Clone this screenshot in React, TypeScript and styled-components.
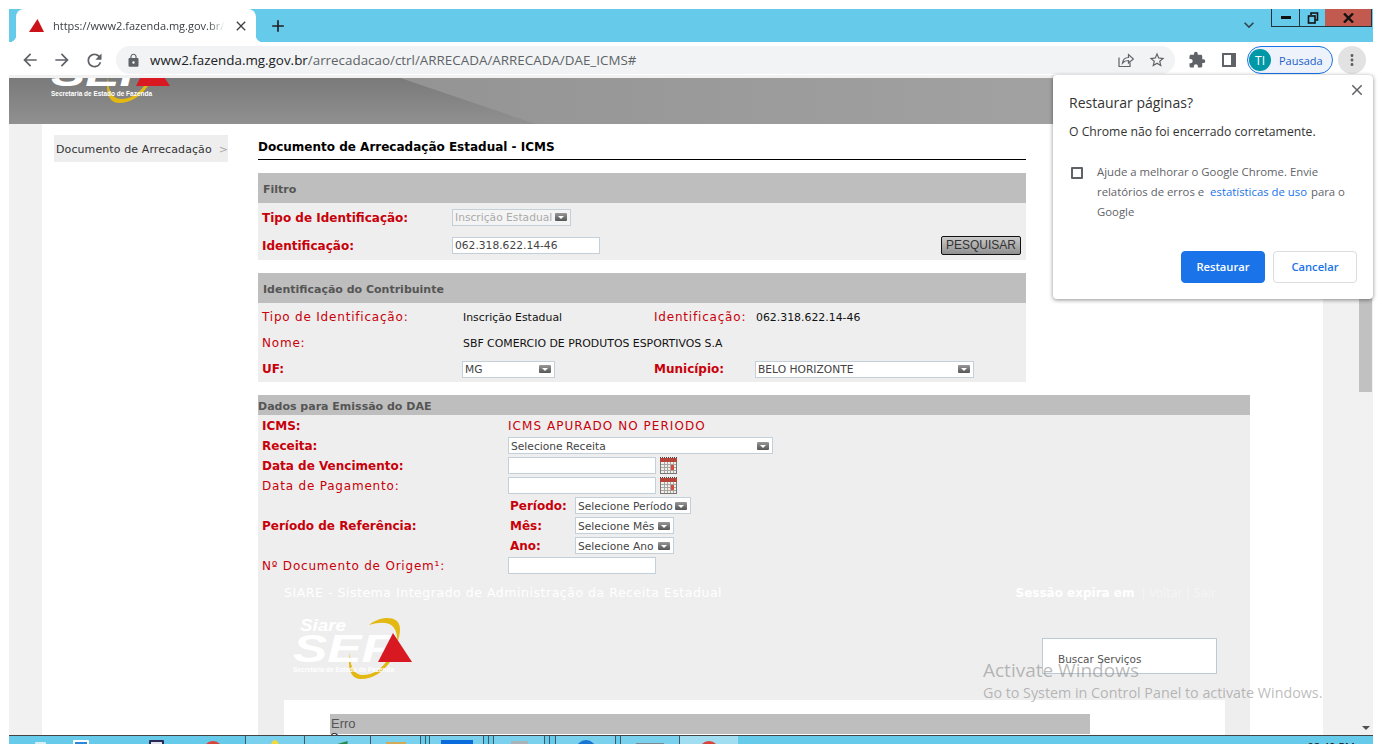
import { ReactNode } from "react";
import styled, { createGlobalStyle } from "styled-components";
import {
  MdAdd,
  MdArrowBack,
  MdArrowForward,
  MdClose,
  MdExpandMore,
  MdExtension,
  MdLock,
  MdMoreVert,
  MdRefresh,
  MdStarBorder,
} from "react-icons/md";

const GlobalStyle = createGlobalStyle`
  html, body {
    margin: 0;
    padding: 0;
    background: #fff;
    overflow: hidden;
  }
  * { box-sizing: border-box; }
`;

const CHROME_FONT = `"Open Sans", "Noto Sans", sans-serif`;
const PAGE_FONT = `"DejaVu Sans", Verdana, sans-serif`;
const RED = "#c8000a";

/* browser frame */
const Screen = styled.div`
  position: relative;
  width: 1382px;
  height: 744px;
  padding: 9px 9px 0;
  overflow: hidden;
  display: flex;
  flex-direction: column;
`;

const TabStrip = styled.div`
  height: 33px;
  flex: none;
  background: #66cbea;
  display: flex;
  align-items: stretch;
  padding-left: 7px;
`;

const Tab = styled.div`
  position: relative;
  width: 240px;
  background: #fff;
  border-radius: 8px 8px 0 0;
  display: flex;
  align-items: center;
  padding: 0 7px 0 13px;
  font: 11px ${CHROME_FONT};
  color: #3c4043;

  &::before,
  &::after {
    content: "";
    position: absolute;
    bottom: 0;
    width: 7px;
    height: 7px;
  }
  &::before {
    left: -7px;
    background: radial-gradient(circle at 0 0, transparent 7px, #fff 7.5px);
  }
  &::after {
    right: -7px;
    background: radial-gradient(circle at 100% 0, transparent 7px, #fff 7.5px);
  }
`;

const TabTitle = styled.span`
  flex: 1;
  margin-left: 9px;
  white-space: nowrap;
  overflow: hidden;
  -webkit-mask-image: linear-gradient(90deg, #000 155px, transparent 172px);
  mask-image: linear-gradient(90deg, #000 155px, transparent 172px);
`;

const StripIcon = styled.span<{ $gap?: number; $color?: string }>`
  display: flex;
  align-items: center;
  margin-left: ${(p) => p.$gap ?? 0}px;
  color: ${(p) => p.$color ?? "#202124"};
`;

const ChevronIcon = styled(StripIcon)`
  padding-bottom: 2px;
`;

const StripSpacer = styled.div`
  flex: 1;
`;

const WindowControls = styled.div`
  display: flex;
  height: 18px;
  margin-left: 12px;
  margin-right: 1px;
  border: 1px solid #22333b;
  border-top: none;
`;

const WindowButton = styled.div<{ $w: number; $close?: boolean }>`
  width: ${(p) => p.$w}px;
  display: flex;
  align-items: center;
  justify-content: center;
  background: ${(p) => (p.$close ? "#c35a50" : "transparent")};
  border-left: ${(p) => (p.$close ? "none" : "1px solid #22333b")};
  &:first-child {
    border-left: none;
  }
`;

const Toolbar = styled.div`
  height: 36px;
  flex: none;
  background: #fff;
  border-bottom: 3px solid #f1f1f1;
  display: flex;
  align-items: flex-start;
  padding: 4px 7px 0 0;
`;

const NavButton = styled.span`
  width: 32px;
  height: 28px;
  display: flex;
  align-items: center;
  justify-content: center;
  color: #5f6368;
  &:first-child {
    margin-left: 5px;
  }
`;

const AddressBar = styled.div`
  width: 1059px;
  height: 28px;
  margin-left: 6px;
  border-radius: 14px;
  background: #f1f3f4;
  display: flex;
  align-items: center;
  padding: 0 9px 0 10px;
  font: 13.4px ${CHROME_FONT};
  color: #5f6368;
`;

const Url = styled.span`
  flex: 1;
  margin-left: 9px;
  white-space: nowrap;
  b {
    font-weight: 400;
    color: #202124;
  }
`;

const BarIcon = styled.span<{ $gap?: number }>`
  display: flex;
  align-items: center;
  justify-content: center;
  color: #5f6368;
  margin-left: ${(p) => p.$gap ?? 0}px;
`;

const ToolIcon = styled.span<{ $gap: number }>`
  height: 28px;
  display: flex;
  align-items: center;
  color: #5f6368;
  margin-left: ${(p) => p.$gap}px;
`;

const ProfilePill = styled.div`
  width: 86px;
  height: 28px;
  margin-left: 11px;
  border: 1px solid #1a73e8;
  border-radius: 14px;
  background: #edf2fb;
  display: flex;
  align-items: center;
  padding-left: 1px;
  font: 11px ${CHROME_FONT};
  color: #1a5fc8;
`;

const Avatar = styled.span`
  width: 22px;
  height: 22px;
  border-radius: 50%;
  background: #0097a7;
  color: #fff;
  font-size: 12px;
  display: flex;
  align-items: center;
  justify-content: center;
  margin-right: 8px;
`;

const MenuButton = styled.span`
  width: 28px;
  height: 28px;
  margin-left: 5px;
  border-radius: 50%;
  background: #e2e2e2;
  color: #5f6368;
  display: flex;
  align-items: center;
  justify-content: center;
`;

/* page */
const Viewport = styled.div`
  flex: 1;
  min-height: 0;
  display: flex;
`;

const PageArea = styled.div`
  flex: 1;
  min-width: 0;
  display: flex;
  flex-direction: column;
  overflow: hidden;
`;

const ScrollTrack = styled.div`
  width: 14px;
  flex: none;
  background: #f1f1f1;
  display: flex;
  flex-direction: column;
`;

const ScrollThumb = styled.div`
  width: 13px;
  height: 314px;
  background: #c1c1c1;
`;

const ScrollArrow = styled.div`
  align-self: center;
  margin-top: auto;
  margin-bottom: 5px;
  width: 0;
  height: 0;
  border-left: 4px solid transparent;
  border-right: 4px solid transparent;
  border-top: 4px solid #505050;
`;

const Banner = styled.div`
  position: relative;
  height: 46px;
  flex: none;
  padding-left: 42px;
  overflow: hidden;
  background: linear-gradient(180deg, #7a7a7a 0%, #909090 100%);

  &::before {
    content: "";
    position: absolute;
    inset: 0;
    background: linear-gradient(90deg, #949494 30%, #a8a8a8 100%);
    clip-path: polygon(29% 0, 100% 0, 100% 100%, 39% 100%);
  }
`;

const BannerLogo = styled.div`
  position: relative;
  margin-top: -37px;
`;

const PageBody = styled.div`
  flex: 1;
  min-height: 0;
  display: flex;
  background: #f1f1f1;
  padding: 0 36px 0 33px;
`;

const Sheet = styled.div`
  flex: 1;
  min-width: 0;
  background: #fff;
  display: flex;
  padding: 11px 0 0 12px;
  overflow: hidden;
`;

const Sidebar = styled.div`
  width: 174px;
  height: 27px;
  flex: none;
  background: #eee;
  display: flex;
  align-items: center;
  justify-content: space-between;
  padding: 2px 0 0 2px;
  font: 11px ${PAGE_FONT};
  letter-spacing: 0.1px;
  color: #333;

  span {
    color: #aaa;
  }
`;

const Content = styled.div`
  width: 992px;
  margin-left: 30px;
  flex: none;
`;

const Title = styled.h1`
  width: 768px;
  height: 25px;
  margin: 0 0 13px;
  border-bottom: 1px solid #000;
  font: bold 12px/24px ${PAGE_FONT};
  color: #000;
`;

const Panel = styled.section`
  width: 768px;
  margin-bottom: 13px;
  background: #eee;
`;

const FilterPanel = styled(Panel)`
  padding-bottom: 1px;
`;

const PanelHeader = styled.div`
  height: 30px;
  padding-left: 5px;
  background: #bebebe;
  font: bold 11px/33px ${PAGE_FONT};
  color: #555;
`;

const FilterRow = styled.div`
  height: 28px;
  display: flex;
  align-items: center;
  padding: 0 5px 0 4px;
`;

const FilterLabel = styled.span`
  width: 190px;
  flex: none;
`;

const Label = styled.span<{ $bold?: boolean }>`
  font: ${(p) => (p.$bold ? "bold" : "normal")} 12px ${PAGE_FONT};
  letter-spacing: ${(p) => (p.$bold ? 0 : 0.8)}px;
  color: ${RED};
  white-space: nowrap;
`;

const Field = styled.div<{ $w: number; $disabled?: boolean }>`
  width: ${(p) => p.$w}px;
  height: 17px;
  flex: none;
  background: ${(p) => (p.$disabled ? "#f4f4f4" : "#fff")};
  border: 1px solid #c3d0da;
  display: flex;
  align-items: center;
  justify-content: space-between;
  padding: 0 3px 0 2px;
  font: 10.7px ${PAGE_FONT};
  color: ${(p) => (p.$disabled ? "#aaa" : "#444")};
  white-space: nowrap;
`;

const CaretBox = styled.span`
  width: 12px;
  height: 8px;
  flex: none;
  display: flex;
  align-items: center;
  justify-content: center;
  border-radius: 1px;
  background: linear-gradient(180deg, #999, #555);

  &::after {
    content: "";
    border-left: 3px solid transparent;
    border-right: 3px solid transparent;
    border-top: 3px solid #fff;
  }
`;

const SearchButton = styled.button`
  width: 80px;
  height: 19px;
  margin-left: auto;
  padding: 0;
  border: 1px solid #111;
  border-radius: 2px;
  background: linear-gradient(180deg, #cacaca, #909090);
  font: 12px "Liberation Sans", Arial, sans-serif;
  color: #333;
`;

const ContribGrid = styled.div`
  display: grid;
  grid-template-columns: 200px 192px 101px 1fr;
  grid-auto-rows: 26px;
  align-items: center;
  padding: 1px 0 0 4px;
`;

const Value = styled.span<{ $span?: number }>`
  grid-column: span ${(p) => p.$span ?? 1};
  padding-left: 1px;
  font: 10.9px ${PAGE_FONT};
  color: #111;
  white-space: nowrap;
`;

const DataHeader = styled.div`
  height: 20px;
  background: #bebebe;
  font: bold 11px/23px ${PAGE_FONT};
  color: #555;
`;

const DataBody = styled.div`
  background: #eee;

  ${Field} {
    padding-top: 1px;
  }
`;

const DataRow = styled.div`
  min-height: 20px;
  display: grid;
  grid-template-columns: 246px 1fr;
  align-items: center;
  padding: 1px 0 0 4px;
`;

const DataValue = styled.div`
  display: flex;
  align-items: center;
  gap: 4px;
`;

const Notice = styled.span`
  font: 12px ${PAGE_FONT};
  letter-spacing: 1.05px;
  color: ${RED};
`;

const SubGroup = styled.div`
  margin-top: -1px;
`;

const SubRow = styled.div`
  height: 20px;
  display: flex;
  align-items: center;
  padding: 1px 0 0 2px;
`;

const SubLabel = styled.span`
  width: 65px;
  flex: none;
  padding-bottom: 2px;
`;

/* embedded login page that shows through the form */
const Embedded = styled.div`
  height: 160px;
  background: #eee;
  padding: 0 25px 0 26px;
  display: flex;
  flex-direction: column;
`;

const EmbeddedTop = styled.div`
  height: 32px;
  flex: none;
  display: flex;
  align-items: center;
  justify-content: space-between;
  padding-top: 3px;
  color: #fff;
  font: 12.5px ${PAGE_FONT};
  letter-spacing: 0.53px;
  white-space: nowrap;
`;

const Session = styled.div`
  display: flex;
  align-items: center;
  gap: 7px;
  margin-right: 9px;
  font-weight: bold;
  font-size: 12px;
  letter-spacing: 0;

  span {
    font-weight: 400;
    font-size: 11.5px;
    color: #f5f5f5;
  }
`;

const EmbeddedMiddle = styled.div`
  height: 93px;
  flex: none;
  display: flex;
  justify-content: space-between;
  padding: 10px 8px 0 9px;
`;

const SearchBox = styled.div`
  width: 175px;
  height: 36px;
  margin-top: 21px;
  background: #fff;
  border: 1px solid #bccad8;
  padding: 14px 0 0 15px;
  font: 10.5px ${PAGE_FONT};
  color: #555;
`;

const ErrorSheet = styled.div`
  flex: 1;
  background: #fff;
  padding: 14px 135px 0 46px;
`;

const ErrorBar = styled.div`
  height: 20px;
  background: #bebebe;
  padding-left: 1px;
  font: 13px/20px "Liberation Sans", Arial, sans-serif;
  color: #555;
`;

const ErrorText = styled.div`
  font: 11px/8px ${PAGE_FONT};
  color: #222;
`;

/* restore bubble */
const Bubble = styled.div`
  position: absolute;
  left: 1053px;
  top: 75px;
  width: 320px;
  height: 224px;
  background: #fff;
  border-radius: 4px;
  box-shadow: 0 1px 4px rgba(0, 0, 0, 0.45);
  padding: 16px;
  font-family: ${CHROME_FONT};
`;

const BubbleClose = styled.span`
  position: absolute;
  top: 6px;
  right: 7px;
  color: #5f6368;
  display: flex;
`;

const BubbleTitle = styled.div`
  height: 24px;
  font-size: 14px;
  line-height: 24px;
  color: #333;
`;

const BubbleText = styled.div`
  margin-top: 7px;
  font-size: 12.2px;
  line-height: 20px;
  color: #333;
`;

const ConsentRow = styled.div`
  margin-top: 20px;
  display: flex;
  align-items: flex-start;
`;

const CheckBox = styled.span`
  width: 12px;
  height: 12px;
  flex: none;
  margin: 5px 14px 0 2px;
  border: 2px solid #5f6368;
  border-radius: 1px;
`;

const ConsentText = styled.div`
  font-size: 11.35px;
  line-height: 20px;
  color: #5f6368;

  a {
    color: #1a73e8;
    margin: 0 1px 0 3px;
  }
`;

const BubbleActions = styled.div`
  position: absolute;
  right: 16px;
  bottom: 16px;
  display: flex;
  gap: 8px;
`;

const BubbleButton = styled.button<{ $primary?: boolean }>`
  width: 84px;
  height: 32px;
  padding: 0 0 2px;
  border-radius: 4px;
  border: 1px solid ${(p) => (p.$primary ? "#1a73e8" : "#dadce0")};
  background: ${(p) => (p.$primary ? "#1a73e8" : "#fff")};
  color: ${(p) => (p.$primary ? "#fff" : "#1a73e8")};
  font: 600 11.2px ${CHROME_FONT};
`;

const Watermark = styled.div`
  position: absolute;
  left: 983px;
  top: 657px;
  font-family: ${CHROME_FONT};
  color: rgba(130, 130, 130, 0.55);
  pointer-events: none;
  white-space: nowrap;
`;

const WatermarkTitle = styled.div`
  font-size: 19px;
  line-height: 26px;
`;

const WatermarkText = styled.div`
  font-size: 14.3px;
  line-height: 20px;
`;

/* task bar, only its top edge fits in the shot */
const Taskbar = styled.div`
  height: 9px;
  flex: none;
  background: #66cbea;
  border-top: 1px solid #444;
  display: flex;
  overflow: hidden;
`;

const TaskButton = styled.div<{ $w: number; $gap?: number; $active?: boolean; $edge?: boolean }>`
  width: ${(p) => p.$w}px;
  flex: none;
  margin-left: ${(p) => p.$gap ?? 0}px;
  background: ${(p) => (p.$active ? "#a2def2" : p.$edge ? "#66cbea" : "#7ad1ed")};
  border-left: 1px solid #3c5a68;
  display: flex;
  justify-content: center;
  &:last-of-type {
    border-right: 1px solid #3c5a68;
  }
`;

const PinnedIcon = styled.span<{ $gap: number; $w: number; $top: number; $color: string; $round?: boolean; $ring?: string }>`
  width: ${(p) => p.$w}px;
  height: 20px;
  flex: none;
  margin: ${(p) => p.$top}px 0 0 ${(p) => p.$gap}px;
  background: ${(p) => p.$color};
  border: ${(p) => (p.$ring ? `2px solid ${p.$ring}` : "none")};
  border-radius: ${(p) => (p.$round ? "50%" : "1px")};
`;

const TaskGlyph = styled.span<{ $w: number; $top: number; $color: string; $round?: boolean; $clip?: string }>`
  width: ${(p) => p.$w}px;
  height: 20px;
  flex: none;
  margin-top: ${(p) => p.$top}px;
  background: ${(p) => p.$color};
  border-radius: ${(p) => (p.$round ? "50%" : "0")};
  clip-path: ${(p) => p.$clip ?? "none"};
`;

const Clock = styled.div`
  margin-left: auto;
  margin-right: 18px;
  padding-top: 6px;
  font: 11px/10px ${CHROME_FONT};
  color: #111;
`;

function SefLogo({ sub }: { sub?: boolean }) {
  return (
    <svg width="120" height="62" viewBox="0 0 120 62" style={{ display: "block" }}>
      <path d="M76 8C86 -1 107 -3 107 12C107 17 106 21 104 26C105 12 100 1 76 8Z" fill="#e3b812" />
      <path d="M97 45C90 55 80 62 68 62C58 62 54 52 57 36C57 48 60 58 70 58C80 58 88 52 93 45Z" fill="#e3b812" />
      {sub && (
        <text x="7" y="14" fontFamily="Liberation Sans" fontWeight="bold" fontStyle="italic" fontSize="17" fill="#fff" textLength="46" lengthAdjust="spacingAndGlyphs">
          Siare
        </text>
      )}
      <text x="0" y="45" fontFamily="Liberation Sans" fontWeight="bold" fontStyle="italic" fontSize="38" fill="#fff" textLength="100" lengthAdjust="spacingAndGlyphs">
        SEF
      </text>
      <polygon points="100,16 119,45 85,45" fill="#d81921" />
      <text x="0" y="55" fontFamily="Liberation Sans" fontWeight="bold" fontSize="7" fill="#fff" textLength="101" lengthAdjust="spacingAndGlyphs">
        Secretaria de Estado de Fazenda
      </text>
    </svg>
  );
}

function Select({ w, disabled, children }: { w: number; disabled?: boolean; children: ReactNode }) {
  return (
    <Field $w={w} $disabled={disabled}>
      {children}
      <CaretBox />
    </Field>
  );
}

function CalendarIcon() {
  return (
    <svg width="17" height="17" viewBox="0 0 17 17">
      <rect x="0.5" y="1.5" width="16" height="15" fill="#f2efe6" stroke="#777" />
      <path d="M1 7.5H16M1 10.5H16M1 13.5H16M4.5 5V16M7.5 5V16M10.5 5V16M13.5 5V16" stroke="#a5a5a5" />
      <rect x="0" y="1" width="17" height="4" fill="#b5443a" />
      <path d="M0 .5H17" stroke="#444" strokeDasharray="1 1" />
      <rect x="11" y="8" width="3" height="5" fill="#d84a3a" />
    </svg>
  );
}

function ShareIcon() {
  return (
    <svg width="16" height="16" viewBox="0 0 16 16" fill="none" stroke="#5f6368" strokeWidth="1.2">
      <path d="M1 5.5V14.5H12V10.5" />
      <path d="M4.5 11C5 7.5 7.5 5.5 10.5 5.5V2.5L15.5 7L10.5 11V8.5C8 8.5 6 9.2 4.5 11Z" />
    </svg>
  );
}

function FaviconTriangle() {
  return (
    <svg width="15" height="13" viewBox="0 0 15 13">
      <polygon points="8.5,0 15,13 0,13" fill="#cc1219" />
    </svg>
  );
}

function SidePanelIcon() {
  return (
    <svg width="14" height="14" viewBox="0 0 14 14">
      <path d="M0 0H14V14H0ZM2 2V12H9V2Z" fill="#5f6368" fillRule="evenodd" />
    </svg>
  );
}

function RestoreGlyph() {
  return (
    <svg width="12" height="12" viewBox="0 0 12 12" fill="none" stroke="#111" strokeWidth="1.6">
      <rect x="1.5" y="4" width="6.5" height="7" />
      <path d="M4 3V1H10.5V8H8.5" />
    </svg>
  );
}

function CloseGlyph() {
  return (
    <svg width="11" height="10" viewBox="0 0 11 10" fill="none" stroke="#111" strokeWidth="2.4">
      <path d="M1 .5L10 9.5M10 .5L1 9.5" />
    </svg>
  );
}

export default function App() {
  return (
    <Screen>
      <GlobalStyle />
      <TabStrip>
        <Tab>
          <FaviconTriangle />
          <TabTitle>https://www2.fazenda.mg.gov.br/arrecadacao</TabTitle>
          <StripIcon $color="#3c4043">
            <MdClose size={16} />
          </StripIcon>
        </Tab>
        <StripIcon $gap={12}>
          <MdAdd size={20} />
        </StripIcon>
        <StripSpacer />
        <ChevronIcon $color="#33454d">
          <MdExpandMore size={20} />
        </ChevronIcon>
        <WindowControls>
          <WindowButton $w={27}>
            <svg width="10" height="3"><rect width="10" height="3" fill="#111" /></svg>
          </WindowButton>
          <WindowButton $w={26}>
            <RestoreGlyph />
          </WindowButton>
          <WindowButton $w={46} $close>
            <CloseGlyph />
          </WindowButton>
        </WindowControls>
      </TabStrip>

      <Toolbar>
        <NavButton><MdArrowBack size={20} /></NavButton>
        <NavButton><MdArrowForward size={20} /></NavButton>
        <NavButton><MdRefresh size={21} /></NavButton>
        <AddressBar>
          <BarIcon><MdLock size={15} /></BarIcon>
          <Url><b>www2.fazenda.mg.gov.br</b>/arrecadacao/ctrl/ARRECADA/ARRECADA/DAE_ICMS#</Url>
          <BarIcon><ShareIcon /></BarIcon>
          <BarIcon $gap={14}><MdStarBorder size={18} /></BarIcon>
        </AddressBar>
        <ToolIcon $gap={13}><MdExtension size={18} /></ToolIcon>
        <ToolIcon $gap={16}><SidePanelIcon /></ToolIcon>
        <ProfilePill>
          <Avatar>TI</Avatar>
          Pausada
        </ProfilePill>
        <MenuButton><MdMoreVert size={18} /></MenuButton>
      </Toolbar>

      <Viewport>
        <PageArea>
          <Banner>
            <BannerLogo>
              <SefLogo />
            </BannerLogo>
          </Banner>
          <PageBody>
            <Sheet>
              <Sidebar>
                Documento de Arrecadação <span>&gt;</span>
              </Sidebar>
              <Content>
                <Title>Documento de Arrecadação Estadual - ICMS</Title>

                <FilterPanel>
                  <PanelHeader>Filtro</PanelHeader>
                  <FilterRow>
                    <FilterLabel><Label $bold>Tipo de Identificação:</Label></FilterLabel>
                    <Select w={119} disabled>Inscrição Estadual</Select>
                  </FilterRow>
                  <FilterRow>
                    <FilterLabel><Label $bold>Identificação:</Label></FilterLabel>
                    <Field $w={148}>062.318.622.14-46</Field>
                    <SearchButton>PESQUISAR</SearchButton>
                  </FilterRow>
                </FilterPanel>

                <Panel>
                  <PanelHeader>Identificação do Contribuinte</PanelHeader>
                  <ContribGrid>
                    <Label>Tipo de Identificação:</Label>
                    <Value>Inscrição Estadual</Value>
                    <Label>Identificação:</Label>
                    <Value>062.318.622.14-46</Value>
                    <Label>Nome:</Label>
                    <Value $span={3}>SBF COMERCIO DE PRODUTOS ESPORTIVOS S.A</Value>
                    <Label $bold>UF:</Label>
                    <Select w={93}>MG</Select>
                    <Label $bold>Município:</Label>
                    <Select w={219}>BELO HORIZONTE</Select>
                  </ContribGrid>
                </Panel>

                <DataHeader>Dados para Emissão do DAE</DataHeader>
                <DataBody>
                  <DataRow>
                    <Label $bold>ICMS:</Label>
                    <Notice>ICMS APURADO NO PERIODO</Notice>
                  </DataRow>
                  <DataRow>
                    <Label $bold>Receita:</Label>
                    <Select w={265}>Selecione Receita</Select>
                  </DataRow>
                  <DataRow>
                    <Label $bold>Data de Vencimento:</Label>
                    <DataValue><Field $w={148} /><CalendarIcon /></DataValue>
                  </DataRow>
                  <DataRow>
                    <Label>Data de Pagamento:</Label>
                    <DataValue><Field $w={148} /><CalendarIcon /></DataValue>
                  </DataRow>
                  <DataRow>
                    <Label $bold>Período de Referência:</Label>
                    <SubGroup>
                      <SubRow>
                        <SubLabel><Label $bold>Período:</Label></SubLabel>
                        <Select w={116}>Selecione Período</Select>
                      </SubRow>
                      <SubRow>
                        <SubLabel><Label $bold>Mês:</Label></SubLabel>
                        <Select w={99}>Selecione Mês</Select>
                      </SubRow>
                      <SubRow>
                        <SubLabel><Label $bold>Ano:</Label></SubLabel>
                        <Select w={99}>Selecione Ano</Select>
                      </SubRow>
                    </SubGroup>
                  </DataRow>
                  <DataRow>
                    <Label>Nº Documento de Origem¹:</Label>
                    <Field $w={148} />
                  </DataRow>
                </DataBody>

                <Embedded>
                  <EmbeddedTop>
                    SIARE - Sistema Integrado de Administração da Receita Estadual
                    <Session>
                      Sessão expira em <span>| Voltar | Sair</span>
                    </Session>
                  </EmbeddedTop>
                  <EmbeddedMiddle>
                    <SefLogo sub />
                    <SearchBox>Buscar Serviços</SearchBox>
                  </EmbeddedMiddle>
                  <ErrorSheet>
                    <ErrorBar>Erro</ErrorBar>
                    <ErrorText>Ocorreu um erro ao processar</ErrorText>
                  </ErrorSheet>
                </Embedded>
              </Content>
            </Sheet>
          </PageBody>
        </PageArea>
        <ScrollTrack>
          <ScrollThumb />
          <ScrollArrow />
        </ScrollTrack>
      </Viewport>

      <Taskbar>
        <PinnedIcon $gap={26} $top={6} $w={11} $color="#d9eef5" />
        <PinnedIcon $gap={27} $top={4} $w={16} $color="#2b88d8" $ring="#fff" />
        <PinnedIcon $gap={60} $top={4} $w={15} $color="#dfe6f0" $ring="#2a2a55" />
        <PinnedIcon $gap={39} $top={5} $w={20} $color="#d9453a" $round />
        <TaskButton $w={59} $gap={22}><TaskGlyph $top={4} $w={10} $color="#f4d93a" $round /></TaskButton>
        <TaskButton $w={66}><TaskGlyph $top={5} $w={20} $color="#2a8a4e" $clip="polygon(100% 0, 0 30%, 0 100%, 100% 100%)" /></TaskButton>
        <TaskButton $w={50}><TaskGlyph $top={6} $w={20} $color="#d4a95a" /></TaskButton>
        <TaskButton $w={5} $edge />
        <TaskButton $w={4} $edge />
        <TaskButton $w={54}><TaskGlyph $top={4} $w={32} $color="#0a6cdc" /></TaskButton>
        <TaskButton $w={5} $edge />
        <TaskButton $w={5} $edge />
        <TaskButton $w={51}><TaskGlyph $top={5} $w={17} $color="#a8b2b8" /></TaskButton>
        <TaskButton $w={5} $edge />
        <TaskButton $w={6} $edge />
        <TaskButton $w={60}><TaskGlyph $top={4} $w={20} $color="#1976d2" $round /></TaskButton>
        <TaskButton $w={5} $edge />
        <TaskButton $w={59}><TaskGlyph $top={7} $w={28} $color="#7b8a92" /></TaskButton>
        <TaskButton $w={59} $active><TaskGlyph $top={5} $w={20} $color="#d9453a" $round /></TaskButton>
        <Clock>08:49 PM</Clock>
      </Taskbar>

      <Bubble>
        <BubbleClose><MdClose size={18} /></BubbleClose>
        <BubbleTitle>Restaurar páginas?</BubbleTitle>
        <BubbleText>O Chrome não foi encerrado corretamente.</BubbleText>
        <ConsentRow>
          <CheckBox />
          <ConsentText>
            Ajude a melhorar o Google Chrome. Envie
            <br />
            relatórios de erros e <a>estatísticas de uso</a> para o
            <br />
            Google
          </ConsentText>
        </ConsentRow>
        <BubbleActions>
          <BubbleButton $primary>Restaurar</BubbleButton>
          <BubbleButton>Cancelar</BubbleButton>
        </BubbleActions>
      </Bubble>

      <Watermark>
        <WatermarkTitle>Activate Windows</WatermarkTitle>
        <WatermarkText>Go to System in Control Panel to activate Windows.</WatermarkText>
      </Watermark>
    </Screen>
  );
}
